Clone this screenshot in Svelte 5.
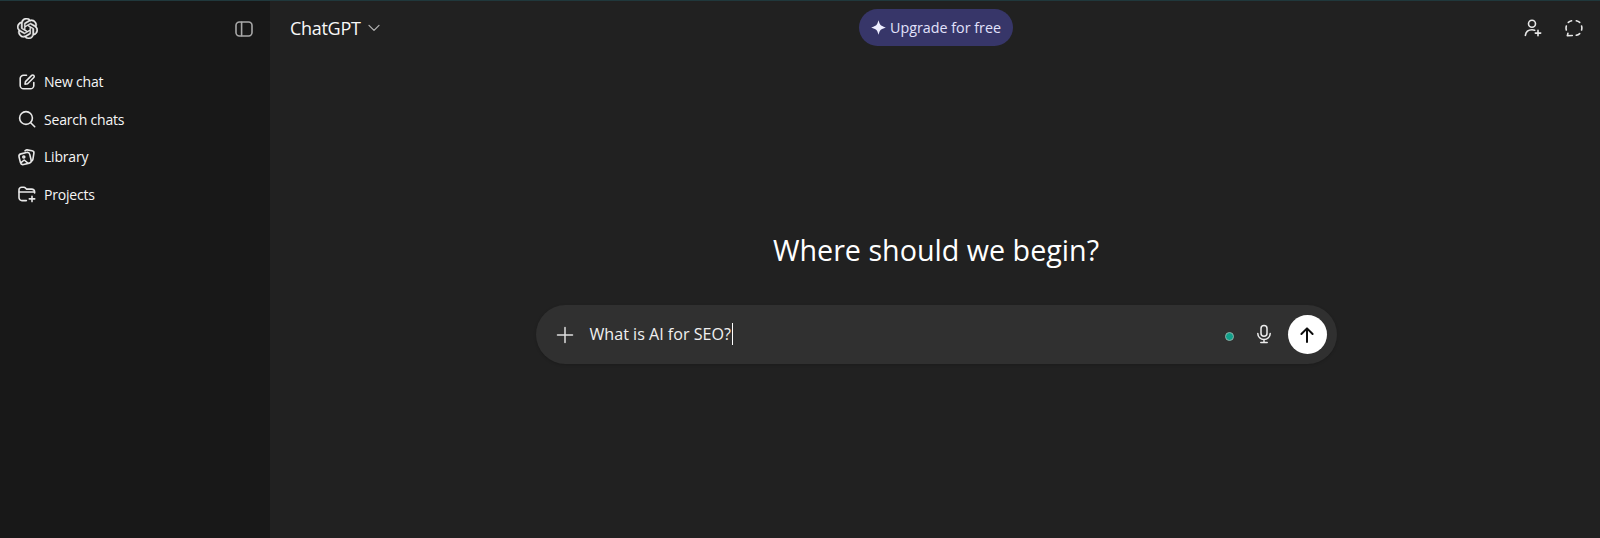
<script>
  const navItems = [
    { label: 'New chat', icon: 'edit' },
    { label: 'Search chats', icon: 'search' },
    { label: 'Library', icon: 'library' },
    { label: 'Projects', icon: 'folder' }
  ];

  const logoPath =
    'M22.2819 9.8211a5.9847 5.9847 0 0 0-.5157-4.9108 6.0462 6.0462 0 0 0-6.5098-2.9A6.0651 6.0651 0 0 0 4.9807 4.1818a5.9847 5.9847 0 0 0-3.9977 2.9 6.0462 6.0462 0 0 0 .7427 7.0966 5.98 5.98 0 0 0 .511 4.9107 6.051 6.051 0 0 0 6.5146 2.9001A5.9847 5.9847 0 0 0 13.2599 24a6.0557 6.0557 0 0 0 5.7718-4.2058 5.9894 5.9894 0 0 0 3.9977-2.9001 6.0557 6.0557 0 0 0-.7475-7.0729zm-9.022 12.6081a4.4755 4.4755 0 0 1-2.8764-1.0408l.1419-.0804 4.7783-2.7582a.7948.7948 0 0 0 .3927-.6813v-6.7369l2.02 1.1686a.071.071 0 0 1 .038.052v5.5826a4.504 4.504 0 0 1-4.4945 4.4944zm-9.6607-4.1254a4.4708 4.4708 0 0 1-.5346-3.0137l.142.0852 4.783 2.7582a.7712.7712 0 0 0 .7806 0l5.8428-3.3685v2.3324a.0804.0804 0 0 1-.0332.0615L9.74 19.9502a4.4992 4.4992 0 0 1-6.1408-1.6464zM2.3408 7.8956a4.485 4.485 0 0 1 2.3655-1.9728V11.6a.7664.7664 0 0 0 .3879.6765l5.8144 3.3543-2.0201 1.1685a.0757.0757 0 0 1-.071 0l-4.8303-2.7865A4.504 4.504 0 0 1 2.3408 7.872zm16.5963 3.8558L13.1038 8.364 15.1192 7.2a.0757.0757 0 0 1 .071 0l4.8303 2.7913a4.4944 4.4944 0 0 1-.6765 8.1042v-5.6772a.79.79 0 0 0-.407-.667zm2.0107-3.0231l-.142-.0852-4.7735-2.7818a.7759.7759 0 0 0-.7854 0L9.409 9.2297V6.8974a.0662.0662 0 0 1 .0284-.0615l4.8303-2.7866a4.4992 4.4992 0 0 1 6.6802 4.66zM8.3065 12.863l-2.02-1.1638a.0804.0804 0 0 1-.038-.0567V6.0742a4.4992 4.4992 0 0 1 7.3757-3.4537l-.142.0805L8.704 5.459a.7948.7948 0 0 0-.3927.6813zm1.0976-2.3654l2.602-1.4998 2.6069 1.4998v2.9994l-2.5974 1.4997-2.6067-1.4997Z';
</script>

<div class="app">
  <aside class="sidebar">
    <div class="side-top">
      <svg class="logo" viewBox="0 0 24 24" width="21" height="21" aria-hidden="true"><path d={logoPath} /></svg>
      <svg class="ico panel" viewBox="0 0 20 20" width="20" height="20" aria-hidden="true">
        <rect x="2" y="3" width="16" height="14" rx="3.4" />
        <path d="M7.6 3.2v13.6" />
      </svg>
    </div>
    <nav class="nav">
      {#each navItems as item}
        <div class="nav-row">
          <svg class="ico" viewBox="0 0 20 20" width="20" height="20" aria-hidden="true">
            {#if item.icon === 'edit'}
              <path d="M9.5 3.2H6.6a3.4 3.4 0 0 0-3.4 3.4v6.8a3.4 3.4 0 0 0 3.4 3.4h6.8a3.4 3.4 0 0 0 3.4-3.4v-2.9" />
              <path d="M8 12.2l.5-2.6 6.2-6.2a1.4 1.4 0 0 1 2 0l.1.1a1.4 1.4 0 0 1 0 2l-6.2 6.2z" />
            {:else if item.icon === 'search'}
              <circle cx="9" cy="9" r="6.4" />
              <path d="M13.7 13.7l4 4" />
            {:else if item.icon === 'library'}
              <path d="M8 3.800l.6-.5a2 2 0 0 1 1.500-.4l5 .8a2.200 2.200 0 0 1 1.800 2.500l-1 6.200a2 2 0 0 1-.9 1.400" />
              <rect x="2.600" y="6" width="11" height="11" rx="2.600" transform="rotate(-14 8.100 11.500)" />
              <circle cx="6.800" cy="10" r="1" />
              <path d="M4 15.600l3.200-2.600 3.400 2.900" />
            {:else}
              <path d="M9.400 16.600H5a3 3 0 0 1-3-3V5.800a2.600 2.600 0 0 1 2.600-2.600h2.200c.8 0 1.400.4 1.900 1l.7.9h5.200A3 3 0 0 1 17.600 8v1" />
              <path d="M2.200 8h15.200" />
              <path d="M15 12.200v5.400M12.300 14.900h5.400" />
            {/if}
          </svg>
          <span>{item.label}</span>
        </div>
      {/each}
    </nav>
  </aside>

  <main class="main">
    <header class="topbar">
      <div class="model">
        <span>ChatGPT</span>
        <svg viewBox="0 0 12 8" width="12" height="8" aria-hidden="true"><path d="M1 1.400l5 5 5-5" /></svg>
      </div>
      <div class="upgrade">
        <svg viewBox="0 0 16 16" width="15" height="15" aria-hidden="true"><path d="M8 .2c.8 2.900 1.500 4.500 2.500 5.300 1 .8 2.500 1.500 5.300 2.500-2.800 1-4.300 1.700-5.300 2.500-1 .8-1.700 2.400-2.500 5.300-.8-2.900-1.500-4.500-2.500-5.300C4.500 9.700 3 9 .2 8c2.800-1 4.300-1.700 5.300-2.500C6.500 4.700 7.200 3.100 8 .2z" /></svg>
        <span>Upgrade for free</span>
      </div>
      <div class="actions">
        <svg class="ico" viewBox="0 0 20 20" width="20" height="20" aria-hidden="true">
          <circle cx="9" cy="5.800" r="3.500" />
          <path d="M2.400 17.400c.5-3.800 3-5.600 6.600-5.600 1 0 1.900.1 2.700.4" />
          <path d="M15 12.400v5.400M12.300 15.100h5.400" />
        </svg>
        <svg class="ico" viewBox="0 0 20 20" width="20" height="20" aria-hidden="true">
          <path d="M4.300 4.400A8 7.600 0 0 1 7.600 2.700M12.300 2.700a8 7.600 0 0 1 3.400 1.700M17.600 8a8 7.600 0 0 1 0 4M15.700 15.600a8 7.600 0 0 1-3.400 1.700M8.300 17.500c-1.500 0-3.600 0-5 .2.300-.8.500-1.600.6-2.300M2.300 12a8 7.600 0 0 1 0-4" />
        </svg>
      </div>
    </header>

    <section class="center">
      <h1>Where should we begin?</h1>
      <div class="composer">
        <svg class="plus" viewBox="0 0 18 18" width="18" height="18" aria-hidden="true"><path d="M9 1.500v15M1.500 9h15" /></svg>
        <div class="prompt">What is AI for SEO?<i class="caret"></i></div>
        <span class="dot"></span>
        <svg class="mic" viewBox="0 0 20 20" width="20" height="20" aria-hidden="true">
          <rect x="7" y="1.600" width="6" height="10.600" rx="3" />
          <path d="M3.800 9.400a6.200 6.200 0 0 0 12.400 0M10 15.600v2.400M6.800 18.400h6.400" />
        </svg>
        <div class="send">
          <svg viewBox="0 0 18 18" width="18" height="18" aria-hidden="true"><path d="M9 16V2.400M3.400 8L9 2.400 14.600 8" /></svg>
        </div>
      </div>
    </section>
  </main>
</div>

<style>
  :global(body) {
    margin: 0;
    background: #212121;
  }

  .app {
    display: grid;
    grid-template-columns: 270px 1fr;
    height: 538px;
    overflow: hidden;
    border-top: 1px solid #20383c;
    box-sizing: border-box;
    color: #fff;
    font-family: 'Open Sans', 'Noto Sans', sans-serif;
  }

  .sidebar {
    background: #181818;
    display: flex;
    flex-direction: column;
  }

  .side-top {
    display: flex;
    align-items: center;
    justify-content: space-between;
    padding: 16px 16px 0 17px;
    height: 23px;
  }

  .logo {
    fill: #ececec;
    stroke: #ececec;
    stroke-width: 0.5;
  }

  .ico {
    fill: none;
    stroke: #e8e8e8;
    stroke-width: 1.600;
    stroke-linecap: round;
    stroke-linejoin: round;
    flex: none;
  }

  .panel {
    stroke: #a8a8a8;
  }

  .nav {
    display: flex;
    flex-direction: column;
    margin-top: 23px;
  }

  .nav-row {
    display: flex;
    align-items: center;
    gap: 7px;
    height: 37.500px;
    padding-left: 17px;
    font-size: 14px;
    letter-spacing: -0.2px;
    color: #f6f6f6;
  }

  .main {
    display: flex;
    flex-direction: column;
    min-width: 0;
  }

  .topbar {
    display: grid;
    grid-template-columns: 1fr auto 1fr;
    align-items: center;
    height: 37px;
    margin-top: 8px;
    padding: 0 16px 0 20px;
  }

  .model {
    display: flex;
    align-items: center;
    gap: 7px;
    font-size: 18px;
    letter-spacing: -0.3px;
    color: #f8f8f8;
  }

  .model svg {
    fill: none;
    stroke: #b0b0b0;
    stroke-width: 1.300;
    stroke-linecap: round;
    stroke-linejoin: round;
  }

  .upgrade {
    display: flex;
    align-items: center;
    gap: 4px;
    height: 37px;
    margin-right: 2px;
    padding: 0 12px;
    border-radius: 19px;
    background: #373669;
    color: #e2e2fc;
    font-size: 14.300px;
  }

  .upgrade svg {
    fill: #eeeeff;
  }

  .actions {
    display: flex;
    justify-content: flex-end;
    gap: 21px;
  }

  .center {
    display: flex;
    flex-direction: column;
    align-items: center;
    padding-top: 184px;
  }

  h1 {
    margin: 0 0 0 2px;
    font-size: 28.700px;
    font-weight: 400;
    line-height: 40px;
    color: #fff;
  }

  .composer {
    display: flex;
    align-items: center;
    box-sizing: border-box;
    width: 801px;
    height: 59px;
    margin-top: 35px;
    margin-left: 2px;
    padding: 0 10px 0 20px;
    border-radius: 30px;
    background: #303030;
    box-shadow: 0 1px 3px rgba(0, 0, 0, 0.18);
  }

  .plus {
    fill: none;
    stroke: #dedede;
    stroke-width: 1.500;
    stroke-linecap: round;
  }

  .prompt {
    flex: 1;
    display: flex;
    align-items: center;
    margin-left: 16px;
    margin-bottom: 2px;
    font-size: 16.100px;
    line-height: 22px;
    color: #f0f0f0;
  }

  .caret {
    display: block;
    width: 1px;
    height: 22px;
    margin-left: 1px;
    background: #fff;
  }

  .dot {
    box-sizing: border-box;
    width: 9px;
    height: 9px;
    border-radius: 50%;
    background: #10a08a;
    border: 1px solid #8fb0a8;
    margin-right: 20px;
    margin-top: 4px;
  }

  .mic {
    fill: none;
    stroke: #ececec;
    stroke-width: 1.500;
    stroke-linecap: round;
    margin-right: 14px;
    margin-bottom: 2px;
  }

  .send {
    display: flex;
    align-items: center;
    justify-content: center;
    width: 39px;
    height: 39px;
    border-radius: 50%;
    background: #fff;
  }

  .send svg {
    fill: none;
    stroke: #0d0d0d;
    stroke-width: 2;
    stroke-linecap: round;
    stroke-linejoin: round;
  }
</style>
